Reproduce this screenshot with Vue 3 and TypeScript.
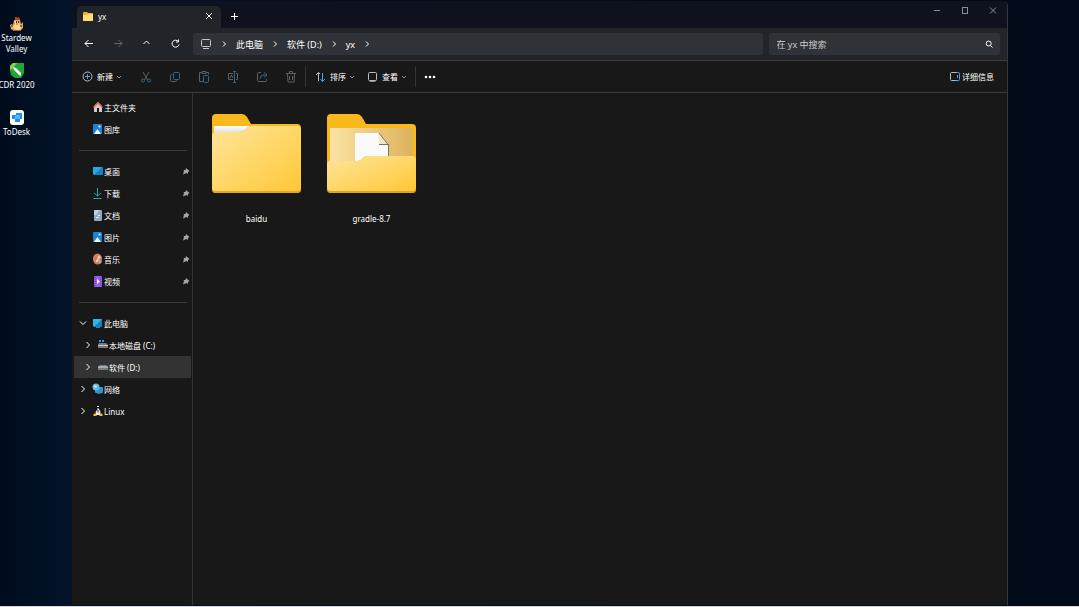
<script setup lang="ts">
import { ref } from 'vue'

interface NavItem {
  label: string
  icon: string
  pinned?: boolean
  chevron?: 'open' | 'closed'
  nested?: boolean
  selected?: boolean
}

const shortcuts = [
  { label: 'Stardew Valley', icon: 'chicken' },
  { label: 'CDR 2020', icon: 'cdr' },
  { label: 'ToDesk', icon: 'todesk' },
]

const groups: NavItem[][] = [
  [
    { label: '主文件夹', icon: 'home' },
    { label: '图库', icon: 'picture' },
  ],
  [
    { label: '桌面', icon: 'desktop', pinned: true },
    { label: '下载', icon: 'download', pinned: true },
    { label: '文档', icon: 'document', pinned: true },
    { label: '图片', icon: 'picture', pinned: true },
    { label: '音乐', icon: 'music', pinned: true },
    { label: '视频', icon: 'video', pinned: true },
  ],
  [
    { label: '此电脑', icon: 'pc', chevron: 'open' },
    { label: '本地磁盘 (C:)', icon: 'driveC', chevron: 'closed', nested: true },
    { label: '软件 (D:)', icon: 'driveD', chevron: 'closed', nested: true, selected: true },
    { label: '网络', icon: 'network', chevron: 'closed' },
    { label: 'Linux', icon: 'linux', chevron: 'closed' },
  ],
]

const crumbs = ['此电脑', '软件 (D:)', 'yx']

const tools = [
  { name: '剪切', icon: 'cut' },
  { name: '复制', icon: 'copy' },
  { name: '粘贴', icon: 'paste' },
  { name: '重命名', icon: 'rename' },
  { name: '共享', icon: 'share' },
  { name: '删除', icon: 'trash' },
]

const folders = [
  { name: 'baidu', open: false },
  { name: 'gradle-8.7', open: true },
]

const query = ref('')
</script>

<template>
  <div class="desktop">
    <nav class="shortcuts" aria-label="桌面">
      <a v-for="s in shortcuts" :key="s.label" href="#" class="shortcut">
        <svg v-if="s.icon === 'chicken'" viewBox="0 0 16 16" width="16" height="16">
          <path d="M6 1h2l1 1 1-1 1 2v2H6z" fill="#c43a1e" />
          <path d="M5 4h6l1 4 2-2v6l-3 3H5l-3-2-1-4 2-1 1 1z" fill="#e0a65a" />
          <path d="M6 5h4v3l2 2v3l-3 1-4-1-1-3 2-1z" fill="#f7d79c" />
          <path d="M7 5h1v2H7zM9 5h1v2H9z" fill="#4d2413" />
          <path d="M7 7h2v2H7z" fill="#ef8f22" />
          <path d="M2 9h2v2H2zM11 9h2v2h-2zM5 14h6v1H5z" fill="#a95b26" />
        </svg>
        <svg v-else-if="s.icon === 'cdr'" viewBox="0 0 16 16" width="16" height="16">
          <path d="M4 0h11v10l-3 5H6l-4-3-1-5V3z" fill="#22a637" />
          <path d="M4 0h4L3 6l-2 1V3z" fill="#8bd34a" />
          <path d="M4 4l3 1 5 5v3l-2-1-5-5z" fill="#f4fff4" />
        </svg>
        <svg v-else viewBox="0 0 16 16" width="16" height="16">
          <rect x="1" y="0" width="14" height="15" rx="3" fill="#fff" />
          <path d="M3 5h4V3h6v6h-2v3H6V9H3z" fill="#1f8df0" />
          <path d="M7 5h4v4H6V7z" fill="#56b4ff" />
        </svg>
        <span>{{ s.label }}</span>
      </a>
    </nav>

    <main class="window">
      <header class="titlebar">
        <div class="tab">
          <svg viewBox="0 0 10 9" width="10" height="9">
            <path d="M0 1q0-1 1-1h3l1 1h4q1 0 1 1v6q0 1-1 1H1q-1 0-1-1z" fill="#f5b21c" />
            <path d="M0 3h4l1-1h5v6q0 1-1 1H1q-1 0-1-1z" fill="#ffdc78" />
          </svg>
          <span class="tab-name">yx</span>
          <button class="plain" aria-label="关闭标签页">
            <svg viewBox="0 0 8 8" width="8" height="8"><path d="M1 1l6 6M7 1L1 7" class="line" /></svg>
          </button>
        </div>
        <button class="plain add" aria-label="新建标签页">
          <svg viewBox="0 0 7 7" width="7" height="7"><path d="M3.500 0v7M0 3.500h7" class="line" /></svg>
        </button>
        <div class="controls">
          <button class="plain" aria-label="最小化">
            <svg viewBox="0 0 8 8" width="8" height="8"><path d="M1 4.500h6" class="line" /></svg>
          </button>
          <button class="plain" aria-label="最大化">
            <svg viewBox="0 0 8 8" width="8" height="8"><rect x="1.500" y="1.500" width="5" height="6" class="line" /></svg>
          </button>
          <button class="plain" aria-label="关闭">
            <svg viewBox="0 0 8 8" width="8" height="8"><path d="M1 1.500l6 6M7 1.500l-6 6" class="line" /></svg>
          </button>
        </div>
      </header>

      <div class="navbar">
        <div class="arrows">
          <button class="plain" aria-label="后退">
            <svg viewBox="0 0 10 10" width="10" height="10"><path d="M9 4.500H1M4.500 1L1 4.500 4.500 8" class="line" /></svg>
          </button>
          <button class="plain dim" aria-label="前进" disabled>
            <svg viewBox="0 0 10 10" width="10" height="10"><path d="M1 4.500h8M5.500 1L9 4.500 5.500 8" class="line" /></svg>
          </button>
          <button class="plain" aria-label="向上">
            <svg viewBox="0 0 10 10" width="10" height="10"><path d="M1.500 5l3-3 3 3" class="line" /></svg>
          </button>
          <button class="plain" aria-label="刷新">
            <svg viewBox="0 0 10 10" width="10" height="10"><path d="M7.400 2.600A3.500 3.500 0 1 0 8 5.500M7.500 0.500v2.500H5" class="line" /></svg>
          </button>
        </div>
        <div class="address">
          <svg class="device" viewBox="0 0 12 12" width="12" height="12">
            <rect x="1.500" y="1.500" width="9" height="7" rx="1" class="line" />
            <path d="M3 10.500h6" class="line" />
          </svg>
          <svg class="sep" viewBox="0 0 6 8" width="6" height="8"><path d="M2 1.500L4.500 4 2 6.500" class="line" /></svg>
          <template v-for="c in crumbs" :key="c">
            <button class="plain crumb">{{ c }}</button>
            <svg class="sep" viewBox="0 0 6 8" width="6" height="8"><path d="M2 1.500L4.500 4 2 6.500" class="line" /></svg>
          </template>
        </div>
        <label class="search">
          <input v-model="query" type="text" placeholder="在 yx 中搜索" aria-label="在 yx 中搜索" />
          <svg viewBox="0 0 8 8" width="8" height="8"><circle cx="3.700" cy="3.500" r="2.500" class="line" /><path d="M5.500 5.500L7.500 7.500" class="line" /></svg>
        </label>
      </div>

      <div class="toolbar">
        <button class="plain command new">
          <svg viewBox="0 0 12 12" width="12" height="12"><circle cx="5.500" cy="5.500" r="4.500" class="line soft" /><path d="M5.500 3v5M3 5.500h5" class="line blue" /></svg>
          <span>新建</span>
          <svg class="caret" viewBox="0 0 6 6" width="6" height="6"><path d="M1 2l2 2 2-2" class="line" /></svg>
        </button>
        <button v-for="t in tools" :key="t.icon" class="plain tool" :aria-label="t.name" disabled>
          <svg viewBox="0 0 12 12" width="12" height="12">
            <template v-if="t.icon === 'cut'">
              <path d="M3 1l4.500 8M9 1L4.500 9" class="line" />
              <circle cx="3" cy="9.500" r="1.500" class="line blue" /><circle cx="9" cy="9.500" r="1.500" class="line blue" />
            </template>
            <template v-else-if="t.icon === 'copy'">
              <path d="M3.500 3.500h-1q-1 0-1 1v5q0 1 1 1h4q1 0 1-1" class="line" />
              <rect x="4.500" y="1.500" width="6" height="7" rx="1" class="line blue" />
            </template>
            <template v-else-if="t.icon === 'paste'">
              <path d="M4 1.500H1.500v9H5M8 1.500h2.500v2M4 .5h4v2H4z" class="line" />
              <rect x="5.500" y="4.500" width="5" height="7" rx="1" class="line blue" />
            </template>
            <template v-else-if="t.icon === 'rename'">
              <path d="M6 2.500H1.500v6H6M9 2.500h1.500v6H9M3 7l1.500-3L6 7" class="line" />
              <path d="M6 .5h3M7.500.5v11M6 11.500h3" class="line blue" />
            </template>
            <template v-else-if="t.icon === 'share'">
              <path d="M5 1.500H2.500q-1 0-1 1v7q0 1 1 1h7q1 0 1-1V8" class="line" />
              <path d="M4 8q0-4 4-4h3M8 1.500L11 4 8 6.500" class="line blue" />
            </template>
            <path v-else d="M1 2.500h10M4.500 2V.5h3V2M2.500 3l.5 8h6l.5-8M4.500 5v4M7.500 5v4" class="line" />
          </svg>
        </button>
        <span class="divider"></span>
        <button class="plain command sort">
          <svg viewBox="0 0 12 12" width="12" height="12"><path d="M3.500 10V1.500M1 4l2.500-2.500L5 3" class="line soft" /><path d="M7.500 2v8.500M5.500 8l2 2.500L10 8" class="line blue" /></svg>
          <span>排序</span>
          <svg class="caret" viewBox="0 0 6 6" width="6" height="6"><path d="M1 2l2 2 2-2" class="line" /></svg>
        </button>
        <button class="plain command view">
          <svg viewBox="0 0 12 12" width="12" height="12"><rect x="1.500" y="1.500" width="8" height="8" rx="1" class="line soft" /><path d="M2.500 10.500h6" class="line faint" /></svg>
          <span>查看</span>
          <svg class="caret" viewBox="0 0 6 6" width="6" height="6"><path d="M1 2l2 2 2-2" class="line" /></svg>
        </button>
        <span class="divider"></span>
        <button class="plain more" aria-label="更多">
          <svg viewBox="0 0 12 4" width="12" height="4"><circle cx="2" cy="2" r="1.300" /><circle cx="6" cy="2" r="1.300" /><circle cx="10" cy="2" r="1.300" /></svg>
        </button>
        <button class="plain command details">
          <svg viewBox="0 0 12 12" width="12" height="12"><path d="M8 1.500H3.500q-1 0-1 1v6q0 1 1 1H8" class="line soft" /><path d="M8 1.500h2.500q1 0 1 1v6q0 1-1 1H8M9.500 4v3" class="line blue" /></svg>
          <span>详细信息</span>
        </button>
      </div>

      <div class="content">
        <aside class="sidebar">
          <ul v-for="(g, i) in groups" :key="i">
            <li v-for="n in g" :key="n.label">
              <a href="#" class="row" :class="{ nested: n.nested, selected: n.selected }">
                <span class="expander">
                  <svg v-if="n.chevron === 'closed'" viewBox="0 0 8 8" width="8" height="8"><path d="M2.500 1L5.500 4l-3 3" class="line" /></svg>
                  <svg v-else-if="n.chevron === 'open'" viewBox="0 0 8 8" width="8" height="8"><path d="M1 2.500L4 5.500l3-3" class="line" /></svg>
                </span>
                <svg class="glyph" viewBox="0 0 12 12" width="12" height="12">
                  <template v-if="n.icon === 'home'">
                    <path d="M2 5l4-4 4 4v6H7V7H5v4H2z" fill="#c9cbd0" />
                    <path d="M1 6l5-5 5 5-1 1-4-4-4 4z" fill="#ee6a35" />
                  </template>
                  <template v-else-if="n.icon === 'picture'">
                    <rect x="1" y="1" width="9" height="10" rx="1" fill="#1a83d8" />
                    <path d="M2 11l3.500-5L9 11z" fill="#f5fbff" /><circle cx="7.500" cy="3.500" r="1" fill="#fff" />
                  </template>
                  <template v-else-if="n.icon === 'desktop'">
                    <rect x="1" y="2" width="10" height="8" rx="1" fill="#1682c4" /><path d="M1 3q0-1 1-1h8L3 9H1z" fill="#28abd7" />
                  </template>
                  <path v-else-if="n.icon === 'download'" d="M5.500 1v8M2 6l3.500 3L9 6M1.500 11.500h8" class="line teal" />
                  <template v-else-if="n.icon === 'document'">
                    <rect x="2" y="1" width="8" height="11" rx="1" fill="#8fa9c0" />
                    <path d="M2 2q0-1 1-1h5L4 6H2z" fill="#bdd0df" /><path d="M6 6.500h2M4 8.500h3" stroke="#e9f2f8" />
                  </template>
                  <template v-else-if="n.icon === 'music'">
                    <ellipse cx="5.500" cy="6" rx="4.500" ry="5.500" fill="#d3805f" /><path d="M6 6l4 3-2 2z" fill="#bba09a" />
                    <path d="M6 3l2 1v1L6 4.500V8" fill="none" stroke="#ffe4d4" /><circle cx="5" cy="8" r="1" fill="#ffe4d4" />
                  </template>
                  <template v-else-if="n.icon === 'video'">
                    <rect x="2" y="1" width="8" height="11" rx="1" fill="#9a5fe8" />
                    <path d="M3 2v9M9 2v9" stroke="#5b2ba5" stroke-dasharray="1 1" /><path d="M5 4l3 2.500L5 9z" fill="#fff" />
                  </template>
                  <template v-else-if="n.icon === 'pc'">
                    <rect x="1" y="2" width="9" height="8" rx="1" fill="#1480c4" /><path d="M1 3q0-1 1-1h8L3 9H1z" fill="#35b6e0" /><path d="M4 10h4v1H4z" fill="#477791" />
                  </template>
                  <template v-else-if="n.icon === 'driveC'">
                    <path d="M2 1h2v2H2zM5 1h2v2H5z" fill="#2f9be6" /><path d="M2 4h7l2 2v3H1V6z" fill="#777b80" /><path d="M1 6h10v1H1z" fill="#c4c8cb" />
                  </template>
                  <template v-else-if="n.icon === 'driveD'">
                    <path d="M3 4h6l2 2v3H1V6z" fill="#777b80" /><path d="M1 5.500h10v1H1z" fill="#d8dadd" />
                  </template>
                  <template v-else-if="n.icon === 'network'">
                    <rect x="3" y="4" width="8" height="6" rx="1" fill="#2798d6" /><circle cx="4" cy="4" r="3.500" fill="#68b8dc" />
                    <path d="M2 2l3 1-1 2-2-1z" fill="#c4edf8" /><path d="M5 10h4v1H5z" fill="#1f6c9d" />
                  </template>
                  <template v-else>
                    <path d="M5 1h2l1 4 2 4-2 2H4L2 9l2-4z" fill="#111" /><path d="M5 1h2v3l1.500 3L8 10H4L3.500 7 5 5z" fill="#f1f1f1" />
                    <path d="M5 2h2v1.500H5zM5.500 4l1 1.500v2h-1z" fill="#111" /><path d="M1 10l2-2 2 3H2zM11 10L9 8l-2 3h3z" fill="#f4bd31" />
                  </template>
                </svg>
                <span class="name">{{ n.label }}</span>
                <svg v-if="n.pinned" class="pin" viewBox="0 0 8 8" width="8" height="8"><path d="M4 1l3.500 3L6 5v2L4.500 6 1 7.500 2 4 1.500 3H3.500z" fill="#9fa5ab" /></svg>
              </a>
            </li>
          </ul>
        </aside>

        <section class="files">
          <button v-for="f in folders" :key="f.name" class="plain tile">
            <svg viewBox="0 0 89 80" width="89" height="80">
              <defs>
                <linearGradient id="front" x1="0" y1="0" x2="1" y2="1"><stop offset="0" stop-color="#ffe59b" /><stop offset=".5" stop-color="#ffd768" /><stop offset="1" stop-color="#ffc737" /></linearGradient>
                <linearGradient id="inner" x1="0" y1="0" x2="1" y2="0"><stop offset="0" stop-color="#fbe2a4" /><stop offset="1" stop-color="#ddb25d" /></linearGradient>
                <linearGradient id="sheet" x1="0" y1="0" x2="0" y2="1"><stop offset="0" stop-color="#fff" /><stop offset="1" stop-color="#dcdde1" /></linearGradient>
              </defs>
              <path d="M0 4Q0 0 4 0H30Q33 0 35 3L39 10H85Q89 10 89 14V75Q89 79 85 79H4Q0 79 0 75Z" fill="#f9b91c" />
              <template v-if="f.open">
                <path d="M3 14H86V48H3z" fill="url(#inner)" />
                <path d="M28 19H52L61 30V48H28z" fill="#fafafa" />
                <path d="M52 19L61 30H52z" fill="#f3e6c4" />
                <path d="M52 19L61 30.500H52M61.500 30V43" fill="none" stroke="#777266" />
                <path d="M0 50Q0 47 3 47H30Q33 47 35 45L37 43Q38 42 41 42H86Q89 42 89 45V75Q89 79 85 79H4Q0 79 0 75Z" fill="#dfa126" />
                <path d="M0 50Q0 47 3 47H30Q33 47 35 45L37 43Q38 42 41 42H86Q89 42 89 45V73Q89 77 85 77H4Q0 77 0 73Z" fill="url(#front)" />
              </template>
              <template v-else>
                <path d="M2 13Q2 12 3 12H39V19H2z" fill="url(#sheet)" />
                <path d="M0 22Q0 18 4 18H28Q32 18 34 15L36 13Q37 12 40 12H85Q89 12 89 16V75Q89 79 85 79H4Q0 79 0 75Z" fill="#e5a629" />
                <path d="M0 22Q0 18 4 18H28Q32 18 34 15L36 13Q37 12 40 12H85Q89 12 89 16V73Q89 77 85 77H4Q0 77 0 73Z" fill="url(#front)" />
              </template>
            </svg>
            <span>{{ f.name }}</span>
          </button>
        </section>
      </div>
    </main>
  </div>
</template>

<style>
body {
  margin: 0;
  background: #010b1b;
}
</style>

<style scoped>
.desktop {
  display: flex;
  box-sizing: border-box;
  min-height: 100vh;
  padding: 1px 71px 1px 0;
  border-bottom: 1px solid #d5d7da;
  background: linear-gradient(90deg, #000c1d 0, #03132b 72px, #010b1b 60%, #010b1a 100%);
  color: #fff;
  font-family: "Noto Sans", "Noto Sans CJK SC", sans-serif;
  font-size: 8px;
  line-height: 11px;
}
a {
  color: inherit;
  text-decoration: none;
}
svg {
  flex: none;
  display: block;
}
.line {
  fill: none;
  stroke: currentColor;
  stroke-width: 1;
}
.blue {
  stroke: #46a6e8;
}
.soft {
  stroke: #b9bbbe;
}
.teal {
  stroke: #35a1b5;
}
.faint {
  opacity: 0.5;
}
.plain {
  display: flex;
  align-items: center;
  justify-content: center;
  padding: 0;
  border: 0;
  background: none;
  color: inherit;
  font: inherit;
}
.shortcuts {
  flex: none;
  width: 72px;
  padding-top: 15px;
  box-sizing: border-box;
}
.shortcut {
  display: flex;
  flex-direction: column;
  align-items: center;
  width: 33px;
  height: 47px;
  text-align: center;
}
.shortcut span {
  white-space: nowrap;
}
.shortcut:first-child span {
  white-space: normal;
}
.window {
  display: flex;
  flex: 1;
  flex-direction: column;
  min-width: 0;
  overflow: hidden;
  border-right: 1px solid #34373b;
  border-radius: 5px 5px 0 0;
  background: #181818;
}
.titlebar {
  display: flex;
  height: 27px;
  background: #0d121e;
}
.tab {
  display: flex;
  align-items: center;
  box-sizing: border-box;
  width: 144px;
  margin: 5px 0 0 5px;
  padding: 0 8px 2px 6px;
  border-radius: 5px 5px 0 0;
  background: #212429;
}
.tab-name {
  flex: 1;
  padding-left: 5px;
}
.add {
  width: 27px;
  padding-top: 4px;
}
.controls {
  display: flex;
  height: 18px;
  margin-left: auto;
  color: #8a8d92;
}
.controls button {
  width: 28px;
}
.navbar {
  display: flex;
  gap: 6px;
  padding: 5px 7px 5px 2px;
  border-bottom: 1px solid #3a3b3d;
  background: #212429;
  font-size: 9px;
}
.arrows {
  display: flex;
  margin-right: -3px;
}
.arrows button {
  width: 29px;
}
.dim {
  color: #63666a;
}
.address,
.search {
  display: flex;
  align-items: center;
  box-sizing: border-box;
  height: 22px;
  border-radius: 3px;
  background: #2f3237;
}
.address {
  flex: 1;
  gap: 9px;
  padding-left: 7px;
}
.device {
  color: #c3c5c8;
}
.crumb {
  white-space: nowrap;
}
.search {
  flex: none;
  width: 25%;
  min-width: 0;
  padding: 0 7px 0 8px;
}
.search input {
  flex: 1;
  min-width: 0;
  padding: 0;
  border: 0;
  outline: 0;
  background: none;
  color: #fff;
  font: inherit;
}
.search input::placeholder {
  color: #c8cacd;
  opacity: 1;
}
.toolbar {
  display: flex;
  align-items: center;
  height: 31px;
  padding: 0 13px 0 10px;
  border-bottom: 1px solid #3a3b3d;
}
.command {
  gap: 3px;
}
.command .caret {
  color: #8d8f92;
}
.new {
  margin-right: 9px;
}
.tool {
  width: 29px;
  color: #999;
  opacity: 0.55;
}
.divider {
  width: 1px;
  height: 21px;
  background: #343434;
}
.sort {
  margin: 0 12px 0 9px;
}
.view {
  margin-right: 8px;
}
.more {
  margin-left: 8px;
  fill: #fff;
}
.details {
  gap: 2px;
  margin-left: auto;
}
.content {
  display: flex;
  flex: 1;
}
.sidebar {
  flex: none;
  box-sizing: border-box;
  width: 121px;
  padding-top: 3px;
  border-right: 1px solid #343434;
}
.sidebar ul {
  margin: 0;
  padding: 0;
  list-style: none;
}
.sidebar ul + ul::before {
  content: "";
  display: block;
  height: 1px;
  margin: 10px 5px 9px 7px;
  background: #3a3a3a;
}
.row {
  display: flex;
  align-items: center;
  height: 22px;
  margin: 0 1px 0 2px;
  padding-left: 5px;
}
.row.nested {
  padding-left: 10px;
}
.row.selected {
  background: #333;
}
.expander {
  flex: none;
  width: 13px;
}
.name {
  flex: 1;
  white-space: nowrap;
}
.pin {
  margin-right: 1px;
}
.files {
  display: grid;
  flex: 1;
  grid-template-columns: repeat(auto-fill, 115px);
  align-content: start;
  padding: 21px 0 0 6px;
}
.tile {
  flex-direction: column;
  gap: 19px;
}
</style>
